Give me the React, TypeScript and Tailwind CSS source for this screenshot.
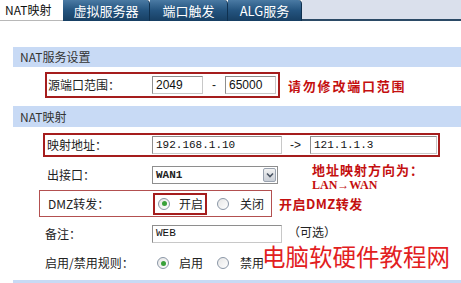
import React from "react";

function Tab({ w, children }: { w: string; children: React.ReactNode }) {
  return (
    <div
      className={`${w} h-full flex items-center justify-center text-white text-[13px] rounded-tr-[4px] border-r border-[#0f3150] bg-gradient-to-b from-[#4a7aa3] via-[#24547f] to-[#173f63]`}
    >
      {children}
    </div>
  );
}

function Header({ children }: { children: React.ReactNode }) {
  return (
    <div className="ml-[13px] bg-[#c8daf5] flex items-center pl-[7px] text-[12px] text-[#333]">
      {children}
    </div>
  );
}

function Input({ w, value, mono }: { w: string; value: string; mono?: boolean }) {
  return (
    <div
      className={`${w} h-[18px] bg-white border border-[#8e8e8e] border-r-[#c8c8c8] border-b-[#c8c8c8] flex items-center pl-[3px] ${
        mono ? "font-['Liberation_Mono',monospace] text-[11px]" : "font-['Liberation_Sans',sans-serif] text-[12px]"
      } text-[#111]`}
    >
      {value}
    </div>
  );
}

function Radio({ checked }: { checked?: boolean }) {
  return (
    <span className="w-[12px] h-[12px] rounded-full border border-[#8a96a6] bg-gradient-to-br from-[#e6e6e6] to-white flex items-center justify-center">
      {checked && <span className="w-[5px] h-[5px] rounded-full bg-[#3aa13a]" />}
    </span>
  );
}

export default function App() {
  return (
    <div className="w-[461px] h-[283px] overflow-hidden bg-white text-[12px] text-[#222] leading-none relative font-['Noto_Sans_CJK_SC',sans-serif]">
      {/* tabs */}
      <div className="flex h-[21px]">
        <div className="w-[63px] h-full bg-white border-b border-[#b8b8b8] flex items-center pl-[5px] text-[12px] text-[#111]">
          NAT映射
        </div>
        <Tab w="w-[87px]">虚拟服务器</Tab>
        <Tab w="w-[78px]">端口触发</Tab>
        <Tab w="w-[74px]">ALG服务</Tab>
        <div className="flex-1 bg-[#dae0ec] border-b-2 border-[#2b4a66]" />
      </div>

      <div className="h-[26px]" />
      <div className="h-[20px] flex flex-col">
        <Header>
          <span className="h-[20px] flex items-center">NAT服务设置</span>
        </Header>
      </div>

      {/* row 1 */}
      <div className="mt-[5px] h-[26px] flex items-center">
        <div className="ml-[45px] w-[235px] h-[26px] border-2 border-[#a51d1d] flex items-center">
          <span className="w-[105px] pl-[1px]">源端口范围：</span>
          <Input w="w-[51px]" value="2049" />
          <span className="w-[22px] text-center font-['Liberation_Sans',sans-serif]">-</span>
          <Input w="w-[51px]" value="65000" />
        </div>
        <span className="ml-[8px] text-[13px] font-bold text-[#c40f0f] tracking-[1.8px]">请勿修改端口范围</span>
      </div>

      <div className="mt-[8px] h-[21px] flex flex-col">
        <Header>
          <span className="h-[21px] flex items-center">NAT映射</span>
        </Header>
      </div>

      {/* mapping */}
      <div className="mt-[6px] h-[24px] flex items-center">
        <div className="ml-[43px] w-[397px] h-[24px] border-2 border-[#a51d1d] flex items-center">
          <span className="w-[107px] pl-[2px]">映射地址：</span>
          <Input w="w-[130px]" value="192.168.1.10" mono />
          <span className="w-[28px] pl-[8px] font-['Liberation_Sans',sans-serif] text-[12px]">-&gt;</span>
          <Input w="w-[127px]" value="121.1.1.3" mono />
        </div>
      </div>

      {/* 出接口 */}
      <div className="mt-[6px] h-[24px] flex items-center relative">
        <span className="ml-[47px] w-[105px]">出接口：</span>
        <div className="w-[126px] h-[18px] bg-white border border-[#8e8e8e] flex items-center justify-between pl-[3px] pr-[1px]">
          <span className="font-['Liberation_Mono',monospace] text-[11px] font-bold text-[#222]">WAN1</span>
          <span className="w-[13px] h-[14px] rounded-[2px] border border-[#9aa3b0] bg-gradient-to-b from-[#f2f2f2] to-[#c9ced6] flex items-center justify-center">
            <svg width="8" height="6" viewBox="0 0 8 6">
              <path d="M1 1.5 L4 4.5 L7 1.5" stroke="#4a5563" strokeWidth="1.6" fill="none" />
            </svg>
          </span>
        </div>
        <div className="ml-[34px] flex flex-col gap-[3px] text-[#c40f0f] font-bold pt-[4px]">
          <span className="text-[13px] tracking-[1px]">地址映射方向为：</span>
          <span className="font-['Liberation_Serif',serif] text-[12px]">LAN→WAN</span>
        </div>
      </div>

      {/* DMZ */}
      <div className="mt-[3px] h-[27px] flex items-center">
        <div className="ml-[39px] w-[233px] h-[27px] border border-[#b35050] flex items-center">
          <span className="w-[113px] pl-[8px]">DMZ转发：</span>
          <div className="w-[54px] h-[22px] border-2 border-[#a51d1d] flex items-center pl-[3px]">
            <Radio checked />
            <span className="ml-[9px]">开启</span>
          </div>
          <span className="ml-[10px]"><Radio /></span>
          <span className="ml-[11px]">关闭</span>
        </div>
        <span className="ml-[7px] text-[13px] font-bold text-[#c40f0f] tracking-[0.5px]">开启DMZ转发</span>
      </div>

      {/* 备注 */}
      <div className="mt-[4px] h-[25px] flex items-center">
        <span className="ml-[45px] w-[107px]">备注：</span>
        <Input w="w-[130px]" value="WEB" mono />
        <span className="ml-[6px] pb-[4px]">（可选）</span>
      </div>

      {/* 启用 */}
      <div className="mt-[5px] h-[24px] flex items-center">
        <span className="ml-[45px] w-[112px]">启用/禁用规则：</span>
        <Radio checked />
        <span className="ml-[10px]">启用</span>
        <span className="ml-[14px]"><Radio /></span>
        <span className="ml-[11px]">禁用</span>
      </div>

      <div className="mt-[5px] ml-[13px] h-[6px] bg-[#c8daf5]" />

      <div className="absolute left-[262px] top-[246px] text-[23.5px] text-[#e2201e] leading-[20px] whitespace-nowrap">
        电脑软硬件教程网
      </div>
    </div>
  );
}
